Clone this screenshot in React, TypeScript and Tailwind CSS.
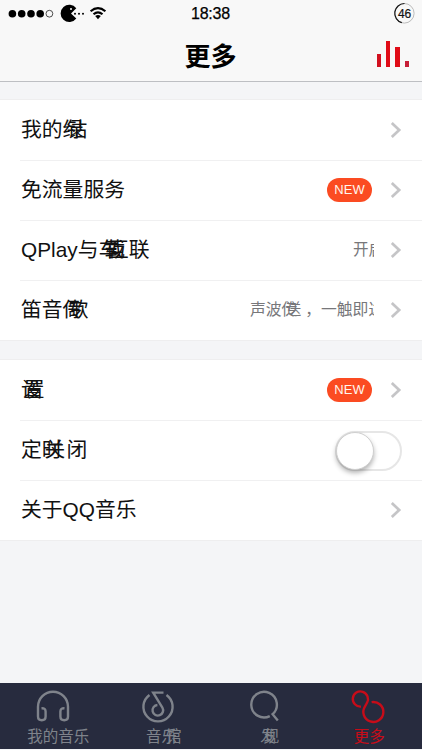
import type { ReactNode } from "react";
import clsx from "clsx";

// A run of glyphs; every run after the first may slide back over the previous one.
type Run = { t: string; shift?: string };

function Label({ runs, className }: { runs: Run[]; className?: string }) {
  return (
    <span className={clsx("flex whitespace-pre", className)}>
      {runs.map((r, i) => (
        <span key={i} className={r.shift}>
          {r.t}
        </span>
      ))}
    </span>
  );
}

function StatusBar() {
  return (
    <div className="grid h-7 grid-cols-3 items-center pr-[7px] pl-2">
      <div className="flex items-center">
        <svg width="100" height="26" viewBox="8 0 100 26">
          <circle cx="12.4" cy="12.7" r="3.8" />
          <circle cx="21.7" cy="12.7" r="3.8" />
          <circle cx="31" cy="12.7" r="3.8" />
          <circle cx="40.2" cy="12.7" r="3.8" />
          <circle cx="49.4" cy="12.7" r="3.4" fill="none" stroke="#222" strokeWidth="0.8" />
          <path d="M71 12.4 76.3 7.2A8.7 8.7 0 1 0 76.3 17.6Z" />
          <circle cx="71" cy="7.9" r="1" fill="#f8f8f8" />
          <circle cx="75" cy="12.7" r="1" />
          <circle cx="79" cy="12.7" r="1" />
          <circle cx="83" cy="12.7" r="1" />
          <g fill="none" stroke="#000" strokeWidth="2.1">
            <path d="M90.6 10.3Q98 3.9 105.4 10.3" />
            <path d="M93.5 13.3Q98 9.4 102.5 13.3" />
          </g>
          <path d="M95.2 15.1Q98 13.1 100.8 15.1L98 18.2Z" />
        </svg>
      </div>
      <div className="-ml-0.5 text-center text-[16px] leading-none tracking-[-0.2px] text-black [-webkit-text-stroke:0.25px_black]">
        18:38
      </div>
      <svg className="justify-self-end" width="22" height="26" viewBox="393 0 22 26">
        <circle cx="404.3" cy="12.3" r="9.8" fill="none" stroke="#bbb" strokeWidth="1" />
        <path
          d="M404.5 2.5A9.8 9.8 0 0 0 401.8 21.7"
          fill="none"
          stroke="#111"
          strokeWidth="1.2"
        />
        <text x="404.6" y="16.6" textAnchor="middle" fontSize="12" stroke="#111" strokeWidth="0.2" fill="#111">
          46
        </text>
      </svg>
    </div>
  );
}

function Header() {
  return (
    <header className="h-[82px] border-b border-[#bdbfc3] bg-[#f8f8f8]">
      <StatusBar />
      <div className="grid h-[53px] grid-cols-3 items-center">
        <span />
        <h1 className="mt-0.5 -ml-px text-center text-[26px] leading-[54px] font-bold text-black">更多</h1>
        <div className="mr-[13px] mb-[5px] flex h-[27px] items-end gap-[5px] justify-self-end">
          <span className="h-[13px] w-[4px] bg-[#d2101f]" />
          <span className="h-[26px] w-[4px] bg-[#e00c17]" />
          <span className="h-[20px] w-[5px] bg-[#e00c17]" />
          <span className="h-[6px] w-[4px] bg-[#c71e37]" />
        </div>
      </div>
    </header>
  );
}

function Chevron() {
  return (
    <svg width="12" height="18" viewBox="0 0 12 18" fill="none" stroke="#c5c5c7" strokeWidth="2.7">
      <path d="M1.8 2 9.2 9 1.8 16" />
    </svg>
  );
}

function NewBadge() {
  return (
    <span className="mr-0.5 flex h-6 w-[45px] items-center justify-center rounded-full bg-[#fb4b22] text-[13px] text-[#fff6ee]">
      NEW
    </span>
  );
}

function Toggle() {
  return (
    <span className="mt-0.5 flex h-10 w-[67px] items-center rounded-full border-2 border-[#e6e6e6] bg-white">
      <span className="-ml-px h-[38px] w-[38px] rounded-full border border-[#cfcfcf] bg-white shadow-[0_3px_5px_rgba(0,0,0,0.3)]" />
    </span>
  );
}

function Row({ label, children, arrow = true }: { label: Run[]; children?: ReactNode; arrow?: boolean }) {
  return (
    <div className="ml-5 flex h-[60px] items-center justify-between border-t border-[#f0f0f1] pr-5 pb-px first:border-transparent">
      <Label runs={label} className="ml-px text-[20.8px] leading-[30px] text-[#111]" />
      <div className="flex items-center">
        {children}
        {arrow && (
          <span className="ml-4">
            <Chevron />
          </span>
        )}
      </div>
    </div>
  );
}

function Group({ children }: { children: ReactNode }) {
  return <section className="bg-white shadow-[0_0_0_1px_#eeeeef]">{children}</section>;
}

function Tab({ label, active, children }: { label: Run[]; active?: boolean; children: ReactNode }) {
  return (
    <div className={clsx("flex flex-col items-center", active ? "text-[#c70c19]" : "text-[#7f838b]")}>
      <svg className="mt-1.5" width="36" height="36" viewBox="0 0 36 36" fill="none" stroke="currentColor" strokeWidth="2.4">
        {children}
      </svg>
      <Label runs={label} className="text-[15.5px] leading-6" />
    </div>
  );
}

export default function App() {
  return (
    <div className="flex h-[750px] w-[422px] flex-col overflow-hidden bg-[#f4f5f7] font-['Liberation_Sans','Noto_Sans_CJK_SC',sans-serif]">
      <Header />

      <main className="mt-[18px] flex flex-1 flex-col gap-5">
        <Group>
          <Row label={[{ t: "我的绿" }, { t: "钻", shift: "-ml-[17px]" }]} />
          <Row label={[{ t: "免流量服务" }]}>
            <NewBadge />
          </Row>
          <Row
            label={[
              { t: "QPlay与车" },
              { t: "载", shift: "-ml-[15px]" },
              { t: "互", shift: "-ml-[17px]" },
              { t: "联" },
            ]}
          >
            <Label
              runs={[{ t: "开启" }]}
              className="w-[21px] overflow-hidden text-[15.5px] text-[#77777a]"
            />
          </Row>
          <Row label={[{ t: "笛音传" }, { t: "歌", shift: "-ml-[16px]" }]}>
            <Label
              runs={[
                { t: "声波传" },
                { t: "送", shift: "-ml-[12px]" },
                { t: "，一触即达", shift: "ml-1" },
              ]}
              className="w-[124px] overflow-hidden text-[15.8px] text-[#77777a]"
            />
          </Row>
        </Group>

        <Group>
          <Row label={[{ t: "设" }, { t: "置", shift: "-ml-[18px]" }]}>
            <NewBadge />
          </Row>
          <Row label={[{ t: "定时" }, { t: "关", shift: "-ml-[18px]" }, { t: "闭", shift: "ml-px" }]} arrow={false}>
            <Toggle />
          </Row>
          <Row label={[{ t: "关于QQ音乐" }]} />
        </Group>
      </main>

      <nav className="mb-px grid h-[66px] grid-cols-4 bg-[#272b3e]">
        <Tab label={[{ t: "我的音乐", shift: "ml-[11px]" }]}>
          {/* headphones */}
          <path d="M6.5 19.2Q10.6 19 10.6 22.5V27.5Q10.6 31.2 6.8 31.2Q3 31.2 3 27.5V17.8A15 15 0 0 1 33 17.8V27.5Q33 31.2 29.2 31.2Q25.4 31.2 25.4 27.5V22.5Q25.4 19 29.5 19.2" />
        </Tab>
        <Tab label={[{ t: "音乐", shift: "ml-[11px]" }, { t: "馆", shift: "-ml-[11px]" }]}>
          {/* note inside an open ring */}
          <path d="M9.5 5.9A14.6 14.6 0 1 0 26.5 5.9" />
          <path d="M23.5 3.6H13.2L22.4 18.6A5.3 5.3 0 1 1 17.4 16" />
        </Tab>
        <Tab label={[{ t: "发", shift: "ml-[12px]" }, { t: "现", shift: "-ml-[12px]" }]}>
          <path d="M23.8 27.1A12.8 12.8 0 1 1 26.6 25.2L31.8 31.4" />
        </Tab>
        <Tab active label={[{ t: "更多" }]}>
          <path d="M10 17.6A7.6 7.6 0 1 1 16 13.8Q15.2 15.5 13.9 17.6A10 10 0 1 0 20.6 13.1" />
        </Tab>
      </nav>
    </div>
  );
}
